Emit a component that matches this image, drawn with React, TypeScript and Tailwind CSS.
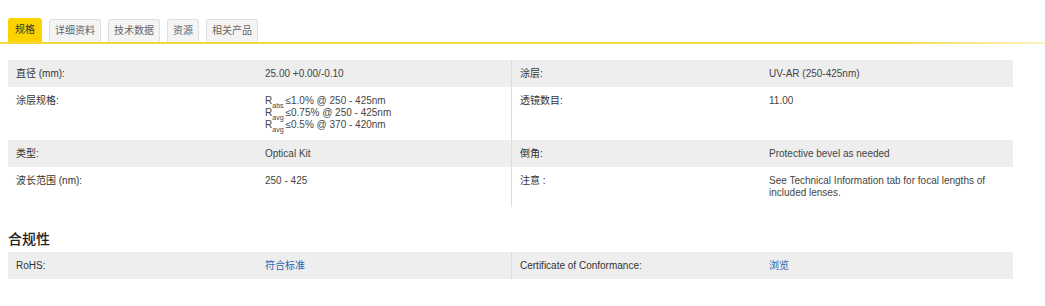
const tabs = ["规格", "详细资料", "技术数据", "资源", "相关产品"];

const font = "font-['Liberation_Sans','Noto_Sans_CJK_SC',sans-serif]";

function Cell({ children, label }: { children: React.ReactNode; label?: boolean }) {
  return (
    <div className={`w-[249px] shrink-0 pl-2 pr-2 pt-[8px] pb-[7px] ${label ? "text-[#333]" : "text-[#444]"}`}>
      {children}
    </div>
  );
}

function Row({
  gray,
  cells,
}: {
  gray?: boolean;
  cells: [React.ReactNode, React.ReactNode, React.ReactNode, React.ReactNode];
}) {
  return (
    <div className={`flex ${gray ? "bg-[#eeeeee]" : "bg-white"}`}>
      <div className="flex w-[503px]">
        <Cell label>{cells[0]}</Cell>
        <Cell>{cells[1]}</Cell>
      </div>
      <div className="flex w-[502px] border-l border-[#dcdcdc]">
        <Cell label>{cells[2]}</Cell>
        <Cell>{cells[3]}</Cell>
      </div>
    </div>
  );
}

function Sub({ t }: { t: string }) {
  return <sub className="text-[7px] align-[-2px] leading-none mr-[2px]">{t}</sub>;
}

export default function App() {
  return (
    <div className={`w-[1045px] h-[306px] bg-white ${font} text-[10px] leading-[12px]`}>
      <div className="pt-[18px]">
        <div className="flex gap-[7px] pl-2 items-end">
          {tabs.map((t, i) => (
            <div
              key={t}
              className={`rounded-t-[3px] flex items-center ${
                i === 0
                  ? "px-[7px] h-[24px] bg-[#fcd200] text-[#333]"
                  : "px-[5px] h-[23px] bg-[#f4f4f4] border border-b-0 border-[#dedede] text-[#666]"
              }`}
            >
              {t}
            </div>
          ))}
        </div>
        <div className="h-[2px] bg-[linear-gradient(to_right,#f5d93a_0%,#f5d93a_84%,#fbf3c4_100%)]" />
      </div>

      <div className="pl-2 pt-[16px]">
        <div className="w-[1005px]">
          <Row gray cells={["直径 (mm):", "25.00 +0.00/-0.10", "涂层:", "UV-AR (250-425nm)"]} />
          <Row
            cells={[
              "涂层规格:",
              <div className="flex flex-col">
                <span>
                  R<Sub t="abs" />≤1.0% @ 250 - 425nm
                </span>
                <span>
                  R<Sub t="avg" />≤0.75% @ 250 - 425nm
                </span>
                <span className="pb-[2px]">
                  R<Sub t="avg" />≤0.5% @ 370 - 420nm
                </span>
              </div>,
              "透镜数目:",
              "11.00",
            ]}
          />
          <Row gray cells={["类型:", "Optical Kit", "倒角:", "Protective bevel as needed"]} />
          <Row
            cells={[
              "波长范围 (nm):",
              "250 - 425",
              "注意 :",
              <span className="block pb-[1px]">See Technical Information tab for focal lengths of included lenses.</span>,
            ]}
          />
        </div>

        <div className="pt-[24px] pb-[5px] text-[14px] leading-[16px] font-medium text-[#222]">合规性</div>

        <div className="w-[1005px]">
          <Row
            gray
            cells={[
              "RoHS:",
              <span className="text-[#2a64b0]">符合标准</span>,
              "Certificate of Conformance:",
              <span className="text-[#2a64b0]">浏览</span>,
            ]}
          />
        </div>
      </div>
    </div>
  );
}
